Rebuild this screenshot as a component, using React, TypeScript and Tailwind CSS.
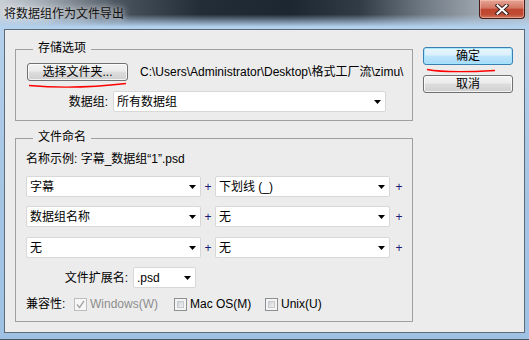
import React from 'react';

const Arrow = () => (
  <svg width="7" height="4" viewBox="0 0 7 4" className="shrink-0">
    <polygon points="0,0 7,0 3.5,4" fill="#000" />
  </svg>
);

const Select: React.FC<{ value: string; className: string }> = ({ value, className }) => (
  <div
    className={`flex h-[21px] items-center justify-between rounded-[2px] border border-[#d8d8d8] bg-white pl-[3px] pr-[4px] ${className}`}
  >
    <span className="leading-[16px]">{value}</span>
    <Arrow />
  </div>
);

const Plus: React.FC<{ className: string }> = ({ className }) => (
  <span className={`text-center leading-[16px] text-[#1a1a78] ${className}`}>+</span>
);

const Check: React.FC<{ checked?: boolean; disabled?: boolean }> = ({ checked, disabled }) =>
  disabled ? (
    <span className="flex h-[13px] w-[13px] shrink-0 items-center justify-center border border-[#bdbdbd] bg-[#f6f6f6]">
      {checked && (
        <svg width="9" height="9" viewBox="0 0 9 9">
          <path d="M1 4.5 L3.5 7.5 L8 1" fill="none" stroke="#a8a8a8" strokeWidth="1.4" />
        </svg>
      )}
    </span>
  ) : (
    <span className="flex h-[13px] w-[13px] shrink-0 items-center justify-center border border-[#8e8f8f] bg-[#f4f4f4] p-[2px]">
      <span className="h-full w-full border border-[#c6c9cd] bg-[linear-gradient(135deg,#cfd2d6_0%,#f3f3f3_100%)]" />
    </span>
  );

export default function App() {
  return (
    <div className="relative flex h-[340px] w-[529px] flex-col overflow-hidden bg-[linear-gradient(to_bottom,#b7d2ec_0%,#a4c4e4_60%,#9fc2e4_100%)] text-[12px] text-black [font-family:'Liberation_Sans','Noto_Sans_CJK_SC',sans-serif]">
      {/* title bar */}
      <div className="flex h-[29px] shrink-0 items-start justify-between bg-[linear-gradient(to_bottom,rgba(0,0,0,0)_50%,#b3d0ed_92%),linear-gradient(to_right,#c8cfd6_0%,#a3acb5_8%,#4b5560_22%,#232d37_38%,#1d2731_55%,#323c46_68%,#6f7983_80%,#9aa3ac_90%,#b2bac2_100%)] pr-[4px]">
        <span className="pl-[4px] pt-[6px] leading-[16px] text-[#111] [text-shadow:0_0_6px_rgba(255,255,255,0.9),0_0_10px_rgba(255,255,255,0.7)]">
          将数据组作为文件导出
        </span>
        <div className="flex h-[19px] w-[46px] items-center justify-center rounded-b-[4px] border border-t-0 border-[#471c17] bg-[linear-gradient(to_bottom,#e7a596_0%,#d27562_45%,#c04630_52%,#bf4a32_80%,#d0795f_100%)] shadow-[inset_0_0_0_1px_rgba(255,210,200,0.45)]">
          <svg width="14" height="11" viewBox="0 0 14 11">
            <path d="M2.5 1.5 L11.5 9.5 M11.5 1.5 L2.5 9.5" stroke="#3a2320" strokeWidth="4" strokeLinecap="square" />
            <path d="M2.5 1.5 L11.5 9.5 M11.5 1.5 L2.5 9.5" stroke="#fff" strokeWidth="2" strokeLinecap="square" />
          </svg>
        </div>
      </div>

      {/* client area */}
      <div className="ml-[4px] flex h-[304px] w-[521px] border border-[#5c6b7a] bg-[#ececec]">
        <div className="flex flex-col pl-[10px] pt-[10px]">
          <fieldset className="w-[398px] border border-[#a0a0a0]">
            <legend className="ml-[17px] px-[5px] pb-[2px] leading-[16px]">存储选项</legend>
            <div className="pb-[8px] pl-[11px] pt-[5px]">
              <div className="flex h-[18px] items-center">
                <button className="h-[18px] w-[101px] rounded-[3px] border border-[#707070] bg-[linear-gradient(to_bottom,#f3f3f3_0%,#ebebeb_45%,#dddddd_50%,#cfcfcf_100%)] leading-[14px] shadow-[inset_0_0_0_1px_rgba(255,255,255,0.75)]">
                  选择文件夹...
                </button>
                <span className="ml-[12px] whitespace-nowrap leading-[16px]">
                  C:\Users\Administrator\Desktop\格式工厂流\zimu\
                </span>
              </div>
              <div className="mt-[10px] flex items-center">
                <span className="w-[81px] text-right leading-[16px]">数据组:</span>
                <Select value="所有数据组" className="ml-[5px] w-[273px]" />
              </div>
            </div>
          </fieldset>

          <fieldset className="mt-[8px] w-[398px] border border-[#a0a0a0]">
            <legend className="ml-[17px] px-[5px] pb-[2px] leading-[16px]">文件命名</legend>
            <div className="pb-[9px] pl-[10px] pt-[4px]">
              <div className="leading-[16px]">名称示例: 字幕_数据组“1”.psd</div>
              <div className="mt-[9px] flex items-center">
                <Select value="字幕" className="w-[175px]" />
                <Plus className="w-[14px]" />
                <Select value="下划线 (_)" className="w-[175px]" />
                <Plus className="w-[18px]" />
              </div>
              <div className="mt-[9px] flex items-center">
                <Select value="数据组名称" className="w-[175px]" />
                <Plus className="w-[14px]" />
                <Select value="无" className="w-[175px]" />
                <Plus className="w-[18px]" />
              </div>
              <div className="mt-[10px] flex items-center">
                <Select value="无" className="w-[175px]" />
                <Plus className="w-[14px]" />
                <Select value="无" className="w-[175px]" />
                <Plus className="w-[18px]" />
              </div>
              <div className="mt-[9px] flex items-center">
                <span className="w-[102px] text-right leading-[16px]">文件扩展名:</span>
                <Select value=".psd" className="ml-[5px] w-[63px]" />
              </div>
              <div className="mt-[8px] flex h-[16px] items-center">
                <span className="w-[48px] leading-[16px]">兼容性:</span>
                <div className="flex w-[100px] items-center">
                  <Check checked disabled />
                  <span className="ml-[3px] leading-[16px] text-[#8d8d8d]">Windows(W)</span>
                </div>
                <div className="flex w-[91px] items-center">
                  <Check />
                  <span className="ml-[3px] leading-[16px]">Mac OS(M)</span>
                </div>
                <div className="flex items-center">
                  <Check />
                  <span className="ml-[3px] leading-[16px]">Unix(U)</span>
                </div>
              </div>
            </div>
          </fieldset>
        </div>

        <div className="ml-[10px] flex flex-col pt-[17px]">
          <button className="h-[18px] w-[90px] rounded-[3px] border border-[#3c7fb1] bg-[linear-gradient(to_bottom,#eaf6fd_0%,#d9f0fc_45%,#bee6fd_50%,#a7d9f5_100%)] leading-[14px] shadow-[inset_0_0_0_1px_rgba(160,230,255,0.9)]">
            确定
          </button>
          <button className="mt-[10px] h-[18px] w-[90px] rounded-[3px] border border-[#707070] bg-[linear-gradient(to_bottom,#f3f3f3_0%,#ebebeb_45%,#dddddd_50%,#cfcfcf_100%)] leading-[14px] shadow-[inset_0_0_0_1px_rgba(255,255,255,0.75)]">
            取消
          </button>
        </div>
      </div>

      <div className="mt-auto h-[1px] w-full bg-[#4a5866]" />

      {/* red hand-drawn marks */}
      <svg className="pointer-events-none absolute left-0 top-0" width="529" height="340">
        <path d="M29 85.5 Q75 89.5 126 83.5" fill="none" stroke="#f00" strokeWidth="1.4" />
        <path d="M427 69.5 C440 72 460 72.5 495 70.5" fill="none" stroke="#f00" strokeWidth="1.4" />
      </svg>
    </div>
  );
}
